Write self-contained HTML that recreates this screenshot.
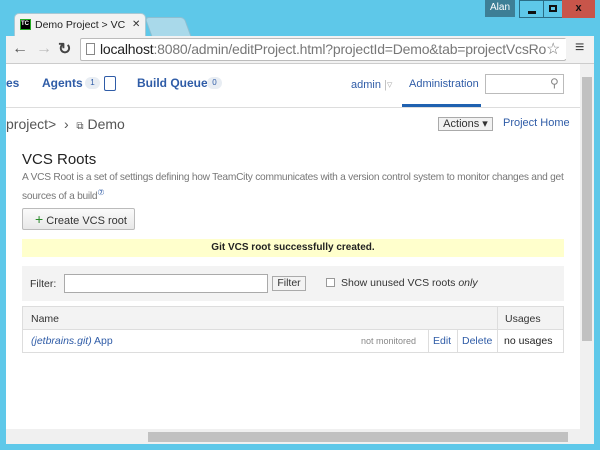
<!DOCTYPE html>
<html><head><style>
*{margin:0;padding:0;box-sizing:border-box}
body{width:600px;height:450px;overflow:hidden;background:#5ec8e9;font-family:"Liberation Sans",sans-serif;position:relative}
.a{position:absolute;white-space:nowrap}
</style></head><body>
<div class="a" style="left:485px;top:0;width:30px;height:17px;background:#3d7f96;color:#fff;font-size:10px;text-align:center;line-height:16px">Alan</div>
<div class="a" style="left:519px;top:0;width:25px;height:18px;background:#5ec8e9;border:1px solid #2a6d86"><div class="a" style="left:8px;top:10px;width:8px;height:3px;background:#111"></div></div>
<div class="a" style="left:543px;top:0;width:20px;height:18px;background:#5ec8e9;border:1px solid #2a6d86"><div class="a" style="left:5px;top:4px;width:8px;height:7px;border:2px solid #111"></div></div>
<div class="a" style="left:562px;top:0;width:33px;height:18px;background:#c8554a;color:#111;font-size:11px;font-weight:bold;text-align:center;line-height:17px">x</div>
<div class="a" style="left:148px;top:17px;width:40px;height:20px;background:#a9d9ea;border:1px solid #8dbfd2;border-radius:4px 4px 0 0;transform:skewX(20deg)"></div>
<div class="a" style="left:14px;top:13px;width:132px;height:24px;background:#f2f2f2;border-radius:5px 5px 0 0;border:1px solid #a8c8d4;border-bottom:none"></div>
<div class="a" style="left:20px;top:19px;width:11px;height:11px;background:#000;border:1px solid #2a2;color:#fff;font-size:6px;font-weight:bold;line-height:8px">TC</div>
<div class="a" style="left:35px;top:19px;width:90px;overflow:hidden;font-size:10.5px;color:#222">Demo Project &gt; VCS Roots</div>
<div class="a" style="left:132px;top:19px;font-size:10px;color:#333">✕</div>
<div class="a" style="left:6px;top:36px;width:588px;height:28px;background:#f2f2f2;border-bottom:1px solid #ccc"></div>
<div class="a" style="left:12px;top:40px;font-size:16px;color:#555">←</div>
<div class="a" style="left:36px;top:40px;font-size:16px;color:#bbb">→</div>
<div class="a" style="left:58px;top:39px;font-size:16px;color:#444;font-weight:bold">↻</div>
<div class="a" style="left:80px;top:38px;width:486px;height:23px;background:#fff;border:1px solid #bbb;border-radius:2px;overflow:hidden;font-size:14px;line-height:21px;padding-left:19px;color:#777;letter-spacing:-0.2px"><span style="color:#222">localhost</span>:8080/admin/editProject.html?projectId=Demo&amp;tab=projectVcsRoots&amp;v</div>
<div class="a" style="left:86px;top:43px;width:9px;height:12px;border:1px solid #888"></div>
<div class="a" style="left:546px;top:39px;width:20px;height:20px;background:#fff;font-size:16px;color:#777">☆</div>
<div class="a" style="left:575px;top:39px;font-size:16px;color:#444">≡</div>
<div class="a" style="left:6px;top:64px;width:574px;height:365px;background:#fff"></div>
<div class="a" style="left:580px;top:64px;width:14px;height:365px;background:#f0f0f0"></div>
<div class="a" style="left:582px;top:77px;width:10px;height:264px;background:#c1c1c1"></div>
<div class="a" style="left:6px;top:429px;width:588px;height:15px;background:#f0f0f0"></div>
<div class="a" style="left:148px;top:432px;width:420px;height:10px;background:#c1c1c1"></div>
<div class="a" style="left:6px;top:76px;font-size:12px;font-weight:bold;color:#2f5ca7">es</div>
<div class="a" style="left:42px;top:76px;font-size:12px;font-weight:bold;color:#2f5ca7">Agents</div>
<div class="a" style="left:85px;top:77px;width:15px;height:12px;background:#e8edf3;border-radius:6px;font-size:8px;text-align:center;line-height:12px;color:#2f5ca7">1</div>
<div class="a" style="left:104px;top:76px;width:12px;height:15px;border:1.5px solid #2f5ca7;border-radius:2px"></div>
<div class="a" style="left:137px;top:76px;font-size:12px;font-weight:bold;color:#2f5ca7">Build Queue</div>
<div class="a" style="left:207px;top:77px;width:15px;height:12px;background:#e8edf3;border-radius:6px;font-size:8px;text-align:center;line-height:12px;color:#2f5ca7">0</div>
<div class="a" style="left:351px;top:78px;font-size:11px;color:#2f5ca7">admin <span style="color:#bbb">|▿</span></div>
<div class="a" style="left:409px;top:78px;font-size:11px;color:#2f5ca7">Administration</div>
<div class="a" style="left:402px;top:104px;width:79px;height:3px;background:#1f61b0"></div>
<div class="a" style="left:6px;top:107px;width:574px;height:1px;background:#ddd"></div>
<div class="a" style="left:485px;top:74px;width:79px;height:20px;border:1px solid #bbb"></div>
<div class="a" style="left:550px;top:76px;font-size:12px;color:#888">⚲</div>
<div class="a" style="left:6px;top:116px;font-size:14px;color:#555">project&gt; &nbsp;›&nbsp; <span style="font-size:10px">⧉</span> Demo</div>
<div class="a" style="left:438px;top:117px;width:55px;height:14px;border:1px solid #aaa;background:#f2f2f2;font-size:11px;line-height:12px;text-align:center;color:#333">Actions ▾</div>
<div class="a" style="left:503px;top:117px;font-size:11px;color:#2f5ca7">Project Home</div>
<div class="a" style="left:22px;top:151px;font-size:15px;color:#222">VCS Roots</div>
<div class="a" style="left:22px;top:170px;font-size:10.2px;color:#777;line-height:15px;width:545px;white-space:normal;letter-spacing:-0.25px">A VCS Root is a set of settings defining how TeamCity communicates with a version control system to monitor changes and get sources of a build<span style="color:#2f5ca7;font-size:8px;vertical-align:4px">⑦</span></div>
<div class="a" style="left:22px;top:208px;width:113px;height:22px;border:1px solid #bbb;border-radius:2px;background:linear-gradient(#fafafa,#e8e8e8);font-size:11px;line-height:20px;padding-left:12px;color:#333"><span style="color:#2a8a2a;font-size:14px">+</span> Create VCS root</div>
<div class="a" style="left:22px;top:239px;width:542px;height:18px;background:#ffffcc;font-size:10px;font-weight:bold;text-align:center;line-height:18px;color:#222">Git VCS root successfully created.</div>
<div class="a" style="left:22px;top:266px;width:542px;height:35px;background:#f3f3f3"></div>
<div class="a" style="left:30px;top:278px;font-size:10.5px;color:#333">Filter:</div>
<div class="a" style="left:64px;top:274px;width:204px;height:19px;background:#fff;border:1px solid #aaa"></div>
<div class="a" style="left:272px;top:276px;width:34px;height:15px;border:1px solid #aaa;background:#f3f3f3;font-size:10.5px;text-align:center;line-height:13px;color:#333">Filter</div>
<div class="a" style="left:326px;top:278px;width:9px;height:9px;border:1px solid #999;background:#fff"></div>
<div class="a" style="left:341px;top:277px;font-size:10.5px;color:#333">Show unused VCS roots <i>only</i></div>
<div class="a" style="left:22px;top:306px;width:542px;height:47px;border:1px solid #ddd"></div>
<div class="a" style="left:23px;top:307px;width:540px;height:23px;background:#f3f3f3;border-bottom:1px solid #ddd"></div>
<div class="a" style="left:497px;top:307px;width:1px;height:46px;background:#ddd"></div>
<div class="a" style="left:428px;top:330px;width:1px;height:23px;background:#ddd"></div>
<div class="a" style="left:457px;top:330px;width:1px;height:23px;background:#ddd"></div>
<div class="a" style="left:31px;top:313px;font-size:10.5px;color:#333">Name</div>
<div class="a" style="left:505px;top:313px;font-size:10.5px;color:#333">Usages</div>
<div class="a" style="left:31px;top:335px;font-size:10.5px;color:#2f5ca7"><i>(jetbrains.git)</i> App</div>
<div class="a" style="left:361px;top:336px;font-size:9px;color:#888">not monitored</div>
<div class="a" style="left:433px;top:335px;font-size:10.5px;color:#2f5ca7">Edit</div>
<div class="a" style="left:462px;top:335px;font-size:10.5px;color:#2f5ca7">Delete</div>
<div class="a" style="left:504px;top:335px;font-size:10.5px;color:#222">no usages</div>
</body></html>
